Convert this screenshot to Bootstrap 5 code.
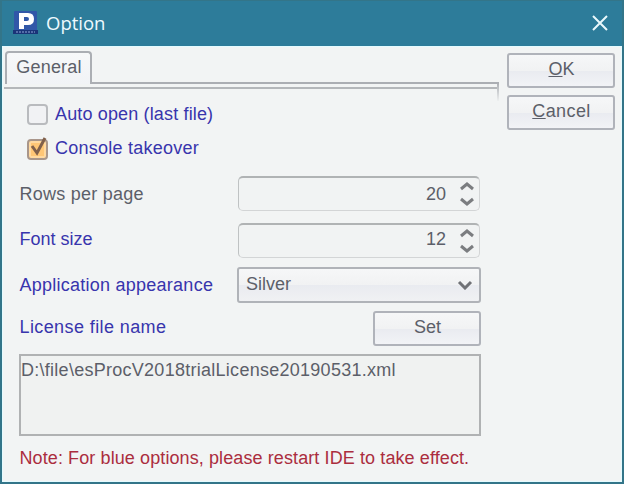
<!DOCTYPE html>
<html lang="en">
<head>
<meta charset="utf-8">
<meta name="viewport" content="width=device-width, initial-scale=1">
<title>Option</title>
<link rel="stylesheet" href="https://cdn.jsdelivr.net/npm/bootstrap@5.3.0/dist/css/bootstrap.min.css">
<style>
body{font-family:"Liberation Sans",Arial,sans-serif;font-size:18px;line-height:22px;color:#5c5f69;background:#f2f4f4}
.dialog{width:624px;height:484px;background:#f2f4f4;border:2px solid #337589;border-top-width:1px}
.titlebar{height:45px;background:#2d7c9a;color:#eefaff;padding:0 13px 0 11px}
.titlebar .caption{font-family:"Open Sans",sans-serif;font-weight:500;font-size:18.500px;margin-left:8px;margin-bottom:2px}
.titlebar svg{margin-bottom:1px}
.content{height:436px;border:1px solid #e4fbff}
.left{width:496px}
.tab-strip{height:33px;margin-top:4px}
.tab-head{width:87px;height:33px;margin-left:2px;border:2px solid #abaeb3;border-bottom:0;border-radius:4px 4px 0 0;background:linear-gradient(#f7f8f9,#f1f3f6);padding-top:3px;padding-left:1px;letter-spacing:.2px}
.tab-line{height:5px;margin-left:1px;border-bottom:2px solid #b4b7ba}
.tab-line-rest{flex:1;border-bottom:2px solid #abaeb3}
.tab-edge{height:17px;margin-top:-5px;margin-bottom:-4px;border-right:2px solid;border-image:linear-gradient(#abaeb3,#f2f4f4) 1;border-left:0}
.blue{color:#3835ad}
.check-row{height:34px;padding-left:24px}
.check-row svg{margin-right:5px}
.form-line{padding-left:16.500px;width:478px}
.gap-a{margin-top:11px}
.gap-b{margin-top:12px}
.gap-c{margin-top:9px}
.ls-1{letter-spacing:.15px}
.ls-2{letter-spacing:.25px}
.ls-3{letter-spacing:.4px}
.btn-silver{--bs-btn-padding-y:0;--bs-btn-padding-x:0;width:108px;height:35px;border:2px solid #b0b3ba;border-radius:3px;background:linear-gradient(#f6f7f8 0,#f1f2f3 50%,#e9ebf0 51%,#f2f3f6 100%);color:#5c5f69;font-size:18px;line-height:29px;padding-bottom:2px;padding-left:1px}
.btn-wide{letter-spacing:.4px}
.side{margin-left:8px;margin-top:6px;gap:7px}
.spin{width:242px;height:35px;margin-right:1px;border:1px solid #d3d5d6;border-top:2px solid #b0b3b4;border-left-color:#bfc2c3;border-radius:5px;background:#f1f3f3;padding:0 4px 0 0}
.spin-value{margin-right:13px}
.combo{width:244px;height:36px;border:2px solid #b0b3b8;border-radius:3px;background:linear-gradient(#f6f7f8 0,#f1f2f3 50%,#e9ebf0 51%,#f0f1f3 100%);padding:0 6px 2px 7px}
.path-box{width:462px;height:82px;margin-left:16px;border:2px solid #b0b2b3;background:#f0f2f1;padding-top:3px;letter-spacing:.27px;white-space:nowrap}
.note{color:#ab2d3e;margin-left:16.500px;margin-top:11px;letter-spacing:.1px;white-space:nowrap}
</style>
<script src="https://cdn.jsdelivr.net/npm/bootstrap@5.3.0/dist/js/bootstrap.bundle.min.js"></script>
</head>
<body class="overflow-hidden">
<div class="dialog">
  <header class="titlebar d-flex align-items-center">
    <svg width="25" height="25" viewBox="0 1 25 25"><rect x="1" y="1" width="23" height="23" rx="1" fill="#3157a8"/><path fill="#fff" fill-rule="evenodd" d="M6 3h9q6 0 6 6t-6 6h-4v4H6zM11 7v4h3q2 0 2-2t-2-2z"/><path d="M0 20h25v4H0z" fill="#1a3478"/><path d="M3 22h19" stroke="#8ea6d8" stroke-dasharray="2 1"/></svg>
    <span class="caption">Option</span>
    <svg class="ms-auto" width="18" height="18" viewBox="0 0 18 18"><path d="M2 2l14 14M16 2L2 16" stroke="#e9f8fc" stroke-width="2"/></svg>
  </header>
  <main class="content d-flex">
    <section class="left">
      <div class="tab-strip d-flex"><div class="tab-head text-center">General</div><div class="tab-line-rest"></div></div>
      <div class="tab-line"></div>
      <div class="tab-edge"></div>
      <div class="check-row blue d-flex align-items-center"><svg width="23" height="24" viewBox="0 0 23 24"><rect x="1" y="3" width="19" height="19" rx="3" fill="#f1f2f4" stroke="#b9bbbe" stroke-width="2"/></svg><span class="ls-1">Auto open (last file)</span></div>
      <div class="check-row blue d-flex align-items-center"><svg width="23" height="24" viewBox="0 0 23 24"><rect x="1" y="4" width="19" height="19" rx="3" fill="#ffd9a0" stroke="#a9968a" stroke-width="2"/><rect x="4" y="7" width="13" height="13" fill="#ffc675"/><path d="M5 10l5 7L18 2" fill="none" stroke="#80604b" stroke-width="3"/></svg><span class="ls-2">Console takeover</span></div>
      <div class="form-line gap-a d-flex justify-content-between align-items-center"><span class="ls-2">Rows per page</span><div class="spin d-flex align-items-center justify-content-end"><span class="spin-value">20</span><svg width="16" height="28" viewBox="0 0 16 28"><path d="M2 9l6-5 6 5M2 19l6 5 6-5" fill="none" stroke="#7b7d80" stroke-width="3"/></svg></div></div>
      <div class="form-line gap-b d-flex justify-content-between align-items-center"><span class="blue pb-1">Font size</span><div class="spin d-flex align-items-center justify-content-end"><span class="spin-value pb-1">12</span><svg width="16" height="28" viewBox="0 0 16 28"><path d="M2 9l6-5 6 5M2 19l6 5 6-5" fill="none" stroke="#7b7d80" stroke-width="3"/></svg></div></div>
      <div class="form-line gap-c d-flex justify-content-between align-items-center"><span class="blue ls-2">Application appearance</span><div class="combo d-flex align-items-center justify-content-between"><span>Silver</span><svg width="16" height="12" viewBox="0 0 16 12"><path d="M2 4l6 6 6-6" fill="none" stroke="#707276" stroke-width="3"/></svg></div></div>
      <div class="form-line d-flex justify-content-between align-items-center mt-2"><span class="blue ls-3 pb-1">License file name</span><button class="btn btn-silver">Set</button></div>
      <div class="path-box mt-2">D:\file\esProcV2018trialLicense20190531.xml</div>
      <div class="note">Note: For blue options, please restart IDE to take effect.</div>
    </section>
    <aside class="side d-flex flex-column"><button class="btn btn-silver"><u>O</u>K</button><button class="btn btn-silver btn-wide"><u>C</u>ancel</button></aside>
  </main>
</div>
</body>
</html>
